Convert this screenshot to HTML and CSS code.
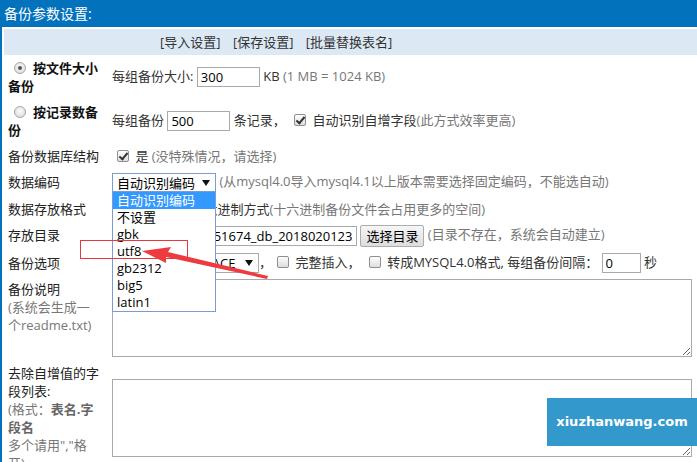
FILE: index.html
```html
<!DOCTYPE html>
<html lang="zh-CN">
<head>
    <meta charset="UTF-8">
    <title>备份参数设置</title>
    <link rel="stylesheet" href="styles.css">
</head>
<body>
    <div class="panel">
        <div class="panel-title">备份参数设置:</div>
        <table class="form">
            <tr class="toolbar">
                <td colspan="2">
                    <a href="#">[导入设置]</a>
                    <a href="#">[保存设置]</a>
                    <a href="#">[批量替换表名]</a>
                </td>
            </tr>
            <tr>
                <th><label class="strong"><input type="radio" name="mode" checked>按文件大小备份</label></th>
                <td>每组备份大小: <input class="txt" value="300"> KB <span class="tip">(1 MB = 1024 KB)</span></td>
            </tr>
            <tr>
                <th><label class="strong"><input type="radio" name="mode">按记录数备份</label></th>
                <td>每组备份 <input class="txt" value="500"> 条记录， <input type="checkbox" checked> 自动识别自增字段<span class="tip">(此方式效率更高)</span></td>
            </tr>
            <tr>
                <th>备份数据库结构</th>
                <td><input type="checkbox" checked> 是 <span class="tip">(没特殊情况，请选择)</span></td>
            </tr>
            <tr>
                <th>数据编码</th>
                <td>
                    <span class="dropdown">
                        <span class="select select-charset focus">自动识别编码<i class="caret"></i></span>
                        <ul class="options">
                            <li class="on">自动识别编码</li>
                            <li>不设置</li>
                            <li>gbk</li>
                            <li>utf8</li>
                            <li>gb2312</li>
                            <li>big5</li>
                            <li>latin1</li>
                        </ul>
                    </span>
                    <span class="tip">(从mysql4.0导入mysql4.1以上版本需要选择固定编码，不能选自动)</span>
                </td>
            </tr>
            <tr>
                <th>数据存放格式</th>
                <td><input type="radio" name="fmt" checked>普通 <input type="radio" name="fmt">十六进制方式<span class="tip">(十六进制备份文件会占用更多的空间)</span></td>
            </tr>
            <tr>
                <th>存放目录</th>
                <td><input class="txt txt-dir" value="../backup/1517451674_db_20180201232000"> <button class="btn">选择目录</button> <span class="tip">(目录不存在，系统会自动建立)</span></td>
            </tr>
            <tr>
                <th>备份选项</th>
                <td><span class="select select-insert">插入方式：REPLACE<i class="caret"></i></span>，<input type="checkbox"> 完整插入， <input type="checkbox"> 转成MYSQL4.0格式, 每组备份间隔： <input class="txt txt-short" value="0"> 秒</td>
            </tr>
            <tr>
                <th>备份说明<br><span class="tip">(系统会生成一个readme.txt)</span></th>
                <td><textarea></textarea></td>
            </tr>
            <tr>
                <th>去除自增值的字段列表:<br><span class="tip">(格式：<b>表名.字段名</b><br>多个请用","格开)</span></th>
                <td><textarea></textarea></td>
            </tr>
        </table>

        <svg class="mark" width="697" height="462" viewBox="0 0 697 462">
            <rect x="80.5" y="240.5" width="107" height="18" fill="none" stroke="#e8383d" stroke-width="1"/>
            <polygon points="142,251 171,247 168,252 268,276 267,279 166,257 166,263" fill="#ee3b3f"/>
        </svg>

        <div class="watermark">xiuzhanwang.com</div>
    </div>
</body>
</html>
```

FILE: styles.css
```css
* {
    box-sizing: border-box;
}
body {
    margin: 0;
    font-family: "Open Sans", "Noto Sans CJK SC", sans-serif;
    font-size: 13px;
    line-height: 18px;
    color: #333;
    background: #fff;
    overflow: hidden;
}
.panel {
    position: relative;
    width: 697px;
    height: 462px;
    border-left: 2px solid #0372bd;
}
.panel-title {
    height: 27px;
    line-height: 27px;
    padding-left: 2px;
    background: #0372bd;
    color: #fff;
    font-size: 14px;
}
.form {
    border-collapse: collapse;
    margin: 2px 0 0 2px;
    width: 693px;
}
.toolbar td {
    height: 26px;
    padding: 0 0 0 156px;
    background: #dce9f5;
}
.toolbar a {
    color: #333;
    text-decoration: none;
    margin-right: 9px;
}
th {
    box-sizing: content-box;
    width: 93px;
    padding: 4px 7px 4px 4px;
    text-align: left;
    font-weight: normal;
    vertical-align: top;
    color: #222;
}
td {
    padding: 3px 5px 3px 4px;
    vertical-align: middle;
    white-space: nowrap;
}
.strong {
    font-weight: bold;
    color: #111;
}
.tip {
    color: #777;
}
.tip b {
    color: #666;
}

/* form controls */
input,
button,
textarea {
    font: inherit;
    color: #000;
}
.txt {
    width: 63px;
    height: 20px;
    padding: 0 3px;
    border: 1px solid #a9a9a9;
    vertical-align: middle;
}
.txt-dir {
    width: 245px;
}
.txt-short {
    width: 39px;
}
input[type="radio"] {
    appearance: none;
    width: 12px;
    height: 12px;
    margin: 0 7px 0 6px;
    border: 1px solid #a9a9a9;
    border-radius: 50%;
    background: radial-gradient(circle at 50% 40%, #fbfbfb, #d6d6d6);
    vertical-align: -1px;
    position: relative;
}
input[type="radio"]:checked::after {
    content: "";
    position: absolute;
    left: 3px;
    top: 3px;
    width: 4px;
    height: 4px;
    border-radius: 50%;
    background: #555;
}
input[type="checkbox"] {
    appearance: none;
    width: 12px;
    height: 12px;
    margin: 0 3px 0 5px;
    border: 1px solid #8e8f8f;
    border-radius: 2px;
    background: linear-gradient(#fdfdfd, #dedede);
    vertical-align: -1px;
    position: relative;
}
input[type="checkbox"]:checked::after {
    content: "";
    position: absolute;
    left: 3px;
    top: 0;
    width: 3px;
    height: 7px;
    border-right: 2px solid #333;
    border-bottom: 2px solid #333;
    transform: rotate(40deg);
}
.btn {
    height: 22px;
    padding: 0 5px;
    border: 1px solid #adadad;
    border-radius: 2px;
    background: linear-gradient(#f6f6f6, #dddddd);
    vertical-align: middle;
}
textarea {
    display: block;
    width: 100%;
    height: 78px;
    border: 1px solid #a9a9a9;
}

/* fake select + open list */
.dropdown {
    position: relative;
    display: inline-block;
    vertical-align: middle;
}
.select {
    display: inline-flex;
    align-items: center;
    height: 20px;
    padding: 0 5px 0 4px;
    border: 1px solid #a9a9a9;
    color: #000;
    vertical-align: middle;
}
.select.focus {
    border-color: #7a9cd3;
}
.select-charset {
    width: 104px;
}
.select-insert {
    width: 147px;
}
.caret {
    margin-left: auto;
    border-left: 4px solid transparent;
    border-right: 4px solid transparent;
    border-top: 6px solid #111;
}
.options {
    position: absolute;
    left: 0;
    top: 19px;
    z-index: 2;
    width: 104px;
    margin: 0;
    padding: 0;
    list-style: none;
    background: #fff;
    border: 1px solid #7a9cd3;
    color: #000;
}
.options li {
    height: 17px;
    line-height: 17px;
    padding-left: 4px;
}
.options li.on {
    background: #3399ff;
    color: #fff;
}

.mark {
    position: absolute;
    left: -2px;
    top: 0;
    z-index: 3;
    pointer-events: none;
}
.watermark {
    position: absolute;
    right: 0;
    bottom: 16px;
    z-index: 4;
    width: 150px;
    height: 48px;
    line-height: 48px;
    text-align: center;
    background: #3399cc;
    color: #fff;
    font-family: "DejaVu Sans", sans-serif;
    font-weight: bold;
    font-size: 13px;
}
```
